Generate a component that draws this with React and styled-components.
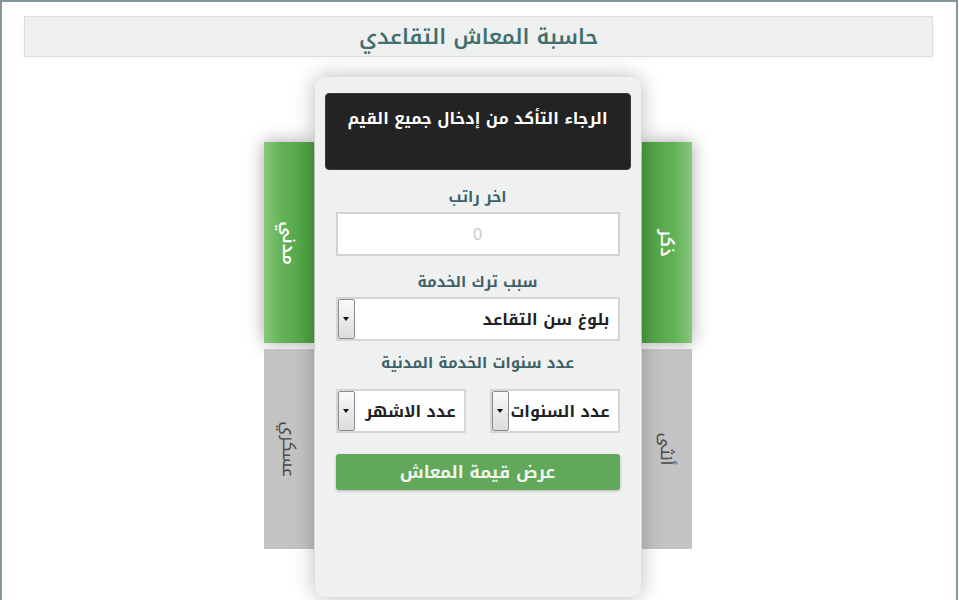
import React from 'react';
import styled, { createGlobalStyle } from 'styled-components';

const GlobalStyle = createGlobalStyle`
  html, body {
    margin: 0;
    padding: 0;
    background: #ffffff;
    overflow: hidden;
  }
  body {
    font-family: "Noto Kufi Arabic", "Noto Sans Arabic", "DejaVu Sans", sans-serif;
  }
`;

const Page = styled.div`
  box-sizing: border-box;
  width: 958px;
  min-height: 600px;
  border: 2px solid #85979a;
  border-bottom: none;
  padding: 14px 23px 0 22px;
  background: #ffffff;
`;

const Header = styled.div`
  height: 39px;
  border: 1px solid #dcdfde;
  background: #eef0ef;
  display: flex;
  align-items: center;
  justify-content: center;
  box-shadow: 0 2px 4px rgba(0, 0, 0, 0.04);
`;

const Title = styled.h1`
  margin: 0;
  font-size: 21px;
  font-weight: 600;
  color: #416e6e;
`;

const Stage = styled.div`
  display: flex;
  justify-content: center;
  align-items: flex-start;
  margin-top: 20px;
  padding-right: 2px;
`;

const TabColumn = styled.div`
  display: flex;
  flex-direction: column;
  gap: 6px;
  width: 50px;
  margin-top: 65px;
  position: relative;
  z-index: 1;
`;

const Tab = styled.div`
  height: ${p => (p.$active ? 201 : 200)}px;
  display: flex;
  align-items: center;
  justify-content: center;
  background: ${p =>
    p.$active
      ? `linear-gradient(to ${p.$side === 'left' ? 'right' : 'left'}, #88c87d 0%, #63b257 35%, #4d9f42 100%)`
      : '#c3c3c3'};
  box-shadow: ${p => (p.$active ? '0 0 18px rgba(0, 0, 0, 0.35)' : 'none')};
  color: ${p => (p.$active ? '#ffffff' : '#4a4a4a')};
  cursor: pointer;
`;

const TabText = styled.span`
  display: inline-block;
  transform: rotate(90deg);
  white-space: nowrap;
  font-size: 17px;
  font-weight: ${p => (p.$active ? 600 : 400)};
`;

const Card = styled.div`
  position: relative;
  z-index: 2;
  width: 326px;
  box-sizing: border-box;
  margin: 0 1px;
  padding: 16px 21px 107px;
  background: #eff1f0;
  border-radius: 10px;
  box-shadow: 0 0 22px rgba(0, 0, 0, 0.28);
  display: flex;
  flex-direction: column;
  align-items: stretch;
`;

const Alert = styled.div`
  margin: 0 -11px;
  height: 77px;
  box-sizing: border-box;
  padding-top: 9px;
  background: #232323;
  border: 1px solid #3a3a3a;
  border-radius: 4px;
  color: #ffffff;
  font-size: 16px;
  font-weight: 700;
  text-align: center;
`;

const Label = styled.div`
  margin-top: ${p => p.$top}px;
  height: 20px;
  line-height: 20px;
  text-align: center;
  font-size: 15px;
  font-weight: 700;
  color: #3d6167;
`;

const Input = styled.input`
  margin-top: 5px;
  height: 44px;
  box-sizing: border-box;
  width: 100%;
  border: 2px solid #d3d3d3;
  background: #ffffff;
  text-align: center;
  font-family: inherit;
  font-size: 16px;
  color: #333;
  outline: none;
  &::placeholder {
    color: #c8c8c8;
  }
`;

const SelectRow = styled.div`
  margin-top: 16px;
  display: flex;
  gap: 24px;
  & > * {
    flex: 1;
  }
`;

const Select = styled.div`
  margin-top: ${p => p.$top || 0}px;
  height: 44px;
  box-sizing: border-box;
  border: 2px solid #d6d6d6;
  background: #ffffff;
  display: flex;
  align-items: stretch;
  cursor: pointer;
`;

const SelectValue = styled.div`
  flex: 1;
  display: flex;
  align-items: center;
  padding-right: 8px;
  font-size: 16px;
  font-weight: 700;
  color: #222;
  white-space: nowrap;
`;

const Arrow = styled.div`
  width: 15px;
  border: 1px solid #8c8c8c;
  border-radius: 2px;
  background: linear-gradient(to bottom, #fafafa, #dcdcdc);
  display: flex;
  align-items: center;
  justify-content: center;
  &::after {
    content: '';
    border-left: 3px solid transparent;
    border-right: 3px solid transparent;
    border-top: 4px solid #111;
  }
`;

const Button = styled.button`
  margin-top: 21px;
  height: 36px;
  border: none;
  border-radius: 3px;
  background: #61a85a;
  box-shadow: 0 1px 3px rgba(0, 0, 0, 0.25);
  color: #f1f6ef;
  font-family: inherit;
  font-size: 17px;
  font-weight: 700;
  cursor: pointer;
`;

const SelectBox = ({ value, top }) => (
  <Select $top={top}>
    <SelectValue>{value}</SelectValue>
    <Arrow />
  </Select>
);

export default function App() {
  return (
    <>
      <GlobalStyle />
      <Page dir="rtl">
        <Header>
          <Title>حاسبة المعاش التقاعدي</Title>
        </Header>
        <Stage>
          <TabColumn>
            <Tab $active $side="right">
              <TabText $active>ذكر</TabText>
            </Tab>
            <Tab>
              <TabText>أنثى</TabText>
            </Tab>
          </TabColumn>
          <Card>
            <Alert>الرجاء التأكد من إدخال جميع القيم</Alert>
            <Label $top={17}>اخر راتب</Label>
            <Input placeholder="0" />
            <Label $top={16}>سبب ترك الخدمة</Label>
            <SelectBox value="بلوغ سن التقاعد" top={5} />
            <Label $top={12}>عدد سنوات الخدمة المدنية</Label>
            <SelectRow>
              <SelectBox value="عدد السنوات" />
              <SelectBox value="عدد الاشهر" />
            </SelectRow>
            <Button>عرض قيمة المعاش</Button>
          </Card>
          <TabColumn>
            <Tab $active $side="left">
              <TabText $active>مدني</TabText>
            </Tab>
            <Tab>
              <TabText>عسكري</TabText>
            </Tab>
          </TabColumn>
        </Stage>
      </Page>
    </>
  );
}
